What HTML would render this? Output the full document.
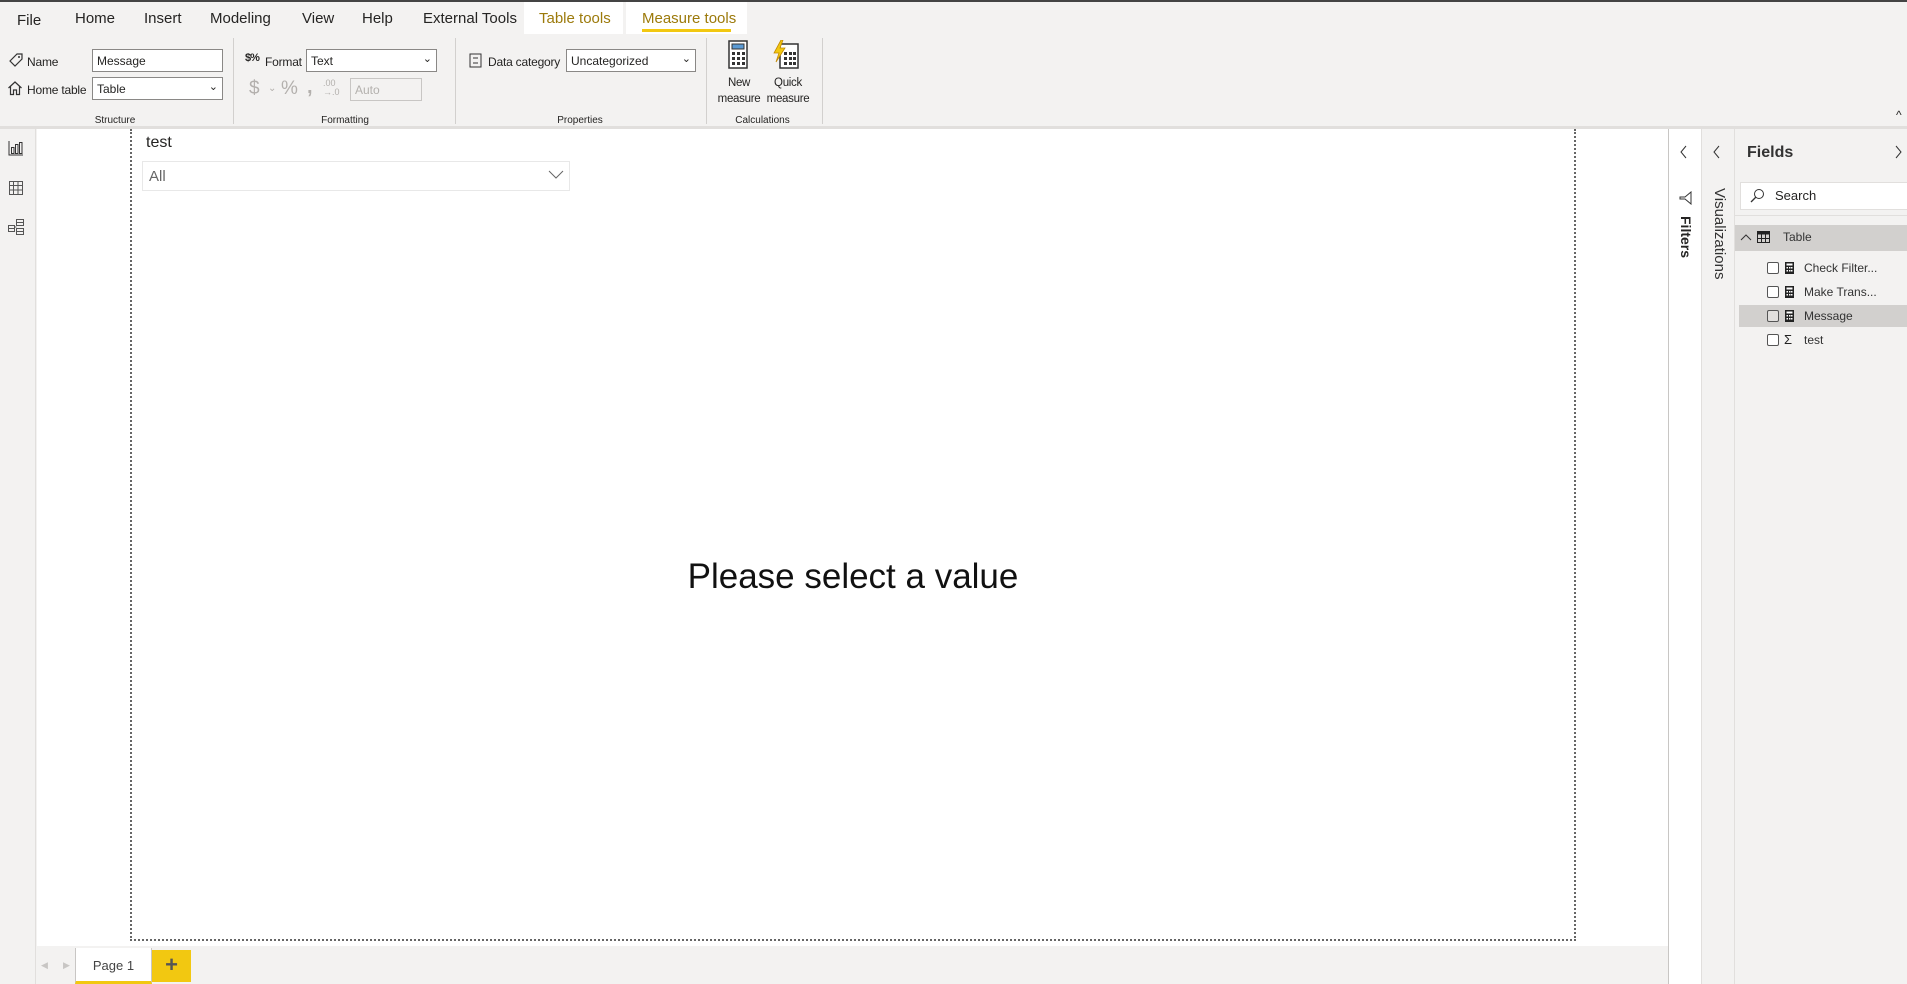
<!DOCTYPE html>
<html><head><meta charset="utf-8">
<style>
*{box-sizing:border-box;margin:0;padding:0}
body{width:1907px;height:984px;overflow:hidden;background:#f3f2f1;font-family:"Liberation Sans",sans-serif;color:#252423;position:relative}
.a{position:absolute}
.t{font-size:15px;top:10px;color:#252423}
.r{font-size:12px;letter-spacing:-0.2px}
.box{background:#fff;border:1px solid #8a8886;height:23px;font-size:12px;padding:4px 4px}
.gl{font-size:10px;top:115px;color:#252423;text-align:center}
.sep{width:1px;background:#d2d0ce;top:38px;height:86px}
.caret{position:absolute;right:4px;top:2px;font-size:11px}
</style></head><body>
<div class="a" style="left:0;top:0;width:1907px;height:2px;background:#444"></div>
<!-- tabs -->
<div class="a t" style="left:17px;top:12px">File</div>
<div class="a t" style="left:75px">Home</div>
<div class="a t" style="left:144px">Insert</div>
<div class="a t" style="left:210px">Modeling</div>
<div class="a t" style="left:302px">View</div>
<div class="a t" style="left:362px">Help</div>
<div class="a t" style="left:423px">External Tools</div>
<div class="a" style="left:524px;top:2px;width:99px;height:32px;background:#fff"></div>
<div class="a t" style="left:539px;color:#9c7a0b">Table tools</div>
<div class="a" style="left:626px;top:2px;width:121px;height:32px;background:#fff"></div>
<div class="a t" style="left:642px;color:#9c7a0b">Measure tools</div>
<div class="a" style="left:642px;top:29px;width:89px;height:3px;background:#f2c811"></div>
<!-- structure -->
<svg class="a" style="left:8px;top:52px" width="16" height="16" viewBox="0 0 16 16"><path d="M2 9 L9 2 H14 V7 L7 14 Z" fill="none" stroke="#333" stroke-width="1.2"/><circle cx="11" cy="5" r="1" fill="#333"/></svg>
<div class="a r" style="left:27px;top:55px">Name</div>
<div class="a box" style="left:92px;top:49px;width:131px">Message</div>
<svg class="a" style="left:7px;top:80px" width="16" height="16" viewBox="0 0 16 16"><path d="M1.5 8 L8 2 L14.5 8 M3.5 6.5 V14.5 H6.5 V10 H9.5 V14.5 H12.5 V6.5" fill="none" stroke="#333" stroke-width="1.2"/></svg>
<div class="a r" style="left:27px;top:83px">Home table</div>
<div class="a box" style="left:92px;top:77px;width:131px">Table<span class="caret">⌄</span></div>
<div class="a gl" style="left:60px;width:110px">Structure</div>
<div class="a sep" style="left:233px"></div>
<!-- formatting -->
<div class="a" style="left:245px;top:52px;font-size:11px;font-weight:bold;letter-spacing:-1px">$%</div>
<div class="a r" style="left:265px;top:55px">Format</div>
<div class="a box" style="left:306px;top:49px;width:131px">Text<span class="caret">⌄</span></div>
<div class="a" style="left:249px;top:78px;font-size:19px;color:#b3b0ad">$</div>
<div class="a" style="left:268px;top:83px;font-size:10px;color:#b3b0ad">⌄</div>
<div class="a" style="left:281px;top:78px;font-size:19px;color:#b3b0ad">%</div>
<div class="a" style="left:307px;top:76px;font-size:20px;color:#b3b0ad;font-weight:bold">,</div>
<div class="a" style="left:323px;top:79px;font-size:9px;color:#b3b0ad;line-height:9px">.00<br>→.0</div>
<div class="a" style="left:350px;top:78px;width:72px;height:23px;border:1px solid #c8c6c4;font-size:12px;color:#b3b0ad;padding:4px 4px">Auto</div>
<div class="a gl" style="left:290px;width:110px">Formatting</div>
<div class="a sep" style="left:455px"></div>
<!-- properties -->
<svg class="a" style="left:469px;top:53px" width="13" height="15" viewBox="0 0 13 15"><rect x="1" y="1" width="11" height="13" fill="none" stroke="#333"/><path d="M4 5h5M4 10h5" stroke="#333"/></svg>
<div class="a r" style="left:488px;top:55px">Data category</div>
<div class="a box" style="left:566px;top:49px;width:130px">Uncategorized<span class="caret">⌄</span></div>
<div class="a gl" style="left:525px;width:110px">Properties</div>
<div class="a sep" style="left:706px"></div>
<!-- calculations -->
<svg class="a" style="left:728px;top:40px" width="20" height="29" viewBox="0 0 20 29"><rect x="1" y="1" width="18" height="27" fill="#fff" stroke="#333" stroke-width="1.5"/><rect x="4" y="4" width="12" height="5" fill="#5b9bd5" stroke="#333"/><g fill="#333"><rect x="4" y="12" width="3" height="3"/><rect x="9" y="12" width="3" height="3"/><rect x="14" y="12" width="3" height="3"/><rect x="4" y="17" width="3" height="3"/><rect x="9" y="17" width="3" height="3"/><rect x="14" y="17" width="3" height="3"/><rect x="4" y="22" width="3" height="3"/><rect x="9" y="22" width="3" height="3"/><rect x="14" y="22" width="3" height="3"/></g></svg>
<svg class="a" style="left:772px;top:40px" width="28" height="29" viewBox="0 0 28 29"><rect x="8" y="4" width="18" height="24" fill="#fff" stroke="#333" stroke-width="1.5"/><g fill="#333"><rect x="12" y="12" width="3" height="3"/><rect x="17" y="12" width="3" height="3"/><rect x="21" y="12" width="3" height="3"/><rect x="12" y="17" width="3" height="3"/><rect x="17" y="17" width="3" height="3"/><rect x="21" y="17" width="3" height="3"/><rect x="12" y="22" width="3" height="3"/><rect x="17" y="22" width="3" height="3"/><rect x="21" y="22" width="3" height="3"/></g><path d="M9 0 L2 13 H7 L4 22 L13 8 H8 L11 0Z" fill="#f2c811" stroke="#c48a00" stroke-width="0.8"/></svg>
<div class="a" style="left:714px;top:75px;width:50px;text-align:center;line-height:16px;font-size:11.5px;letter-spacing:-0.3px">New<br>measure</div>
<div class="a" style="left:763px;top:75px;width:50px;text-align:center;line-height:16px;font-size:11.5px;letter-spacing:-0.3px">Quick<br>measure</div>
<div class="a gl" style="left:710px;width:105px">Calculations</div>
<div class="a sep" style="left:822px"></div>
<div class="a" style="left:1896px;top:108px;font-size:12px">^</div>
<div class="a" style="left:0;top:126px;width:1907px;height:3px;background:#e1dfdd"></div>
<!-- left nav -->
<div class="a" style="left:0;top:129px;width:36px;height:855px;background:#f3f2f1;border-right:1px solid #e1dfdd"></div>
<svg class="a" style="left:8px;top:140px" width="16" height="16" viewBox="0 0 16 16"><path d="M1 1V15H15" fill="none" stroke="#333"/><rect x="3.5" y="7.5" width="2.5" height="6" fill="none" stroke="#333"/><rect x="7.5" y="4.5" width="2.5" height="9" fill="none" stroke="#333"/><rect x="11.5" y="2.5" width="2.5" height="11" fill="none" stroke="#333"/></svg>
<svg class="a" style="left:8px;top:180px" width="16" height="16" viewBox="0 0 16 16"><path d="M1.5 1.5H14.5V14.5H1.5ZM1.5 5.5H14.5M1.5 10H14.5M5.5 1.5V14.5M10 1.5V14.5" fill="none" stroke="#555"/></svg>
<svg class="a" style="left:7px;top:218px" width="18" height="18" viewBox="0 0 18 18"><path d="M1.5 7.5H7.5V13.5H1.5ZM1.5 10.5H7.5M9.5 1.5H16.5V7.5H9.5ZM9.5 4.5H16.5M9.5 10.5H16.5V16.5H9.5ZM9.5 13.5H16.5M7.5 9H9.5" fill="none" stroke="#555"/></svg>
<!-- canvas -->
<div class="a" style="left:37px;top:129px;width:1631px;height:817px;background:#fff"></div>
<div class="a" style="left:130px;top:129px;width:1446px;height:812px;border:2px dotted #666;border-top:none"></div>
<div class="a" style="left:146px;top:134px;font-size:16px;color:#252423">test</div>
<div class="a" style="left:142px;top:161px;width:428px;height:30px;border:1px solid #e8e8e8;background:#fff"></div>
<div class="a" style="left:149px;top:168px;font-size:15px;color:#666">All</div>
<svg class="a" style="left:548px;top:170px" width="16" height="10" viewBox="0 0 16 10"><path d="M1 1L8 8L15 1" fill="none" stroke="#666"/></svg>
<div class="a" style="left:130px;top:557px;width:1446px;text-align:center;font-size:35px;color:#111">Please select a value</div>
<!-- bottom -->
<div class="a" style="left:37px;top:946px;width:1631px;height:38px;background:#f3f2f1"></div>
<div class="a" style="left:41px;top:960px;font-size:9px;color:#c8c6c4">◀</div>
<div class="a" style="left:63px;top:960px;font-size:9px;color:#c8c6c4">▶</div>
<div class="a" style="left:75px;top:948px;width:77px;height:36px;background:#fff;border-left:1px solid #c8c6c4;border-right:1px solid #c8c6c4;border-bottom:3px solid #f2c811"></div>
<div class="a" style="left:75px;top:958px;width:77px;text-align:center;font-size:13px;color:#444">Page 1</div>
<div class="a" style="left:152px;top:950px;width:39px;height:32px;background:#f2c811;text-align:center;font-size:22px;font-weight:bold;color:#555;line-height:30px">+</div>
<!-- filters pane -->
<div class="a" style="left:1668px;top:129px;width:34px;height:855px;background:#fff;border-left:1px solid #c8c6c4;border-right:1px solid #e1dfdd"></div>
<svg class="a" style="left:1679px;top:145px" width="10" height="14" viewBox="0 0 10 14"><path d="M7 1L2 7L7 13" fill="none" stroke="#333"/></svg>
<svg class="a" style="left:1678px;top:191px" width="14" height="14" viewBox="0 0 14 14"><path d="M13 1V13L7 8H2V6H7Z" fill="none" stroke="#333"/></svg>
<div class="a" style="left:1676px;top:216px;transform-origin:0 0;transform:translate(18px,0) rotate(90deg);font-size:14px;font-weight:bold;white-space:nowrap">Filters</div>
<!-- visualizations -->
<div class="a" style="left:1702px;top:129px;width:33px;height:855px;background:#f3f2f1;border-right:1px solid #e1dfdd"></div>
<svg class="a" style="left:1712px;top:145px" width="10" height="14" viewBox="0 0 10 14"><path d="M7 1L2 7L7 13" fill="none" stroke="#333"/></svg>
<div class="a" style="left:1710px;top:188px;transform-origin:0 0;transform:translate(18px,0) rotate(90deg);font-size:15px;white-space:nowrap;color:#333">Visualizations</div>
<!-- fields -->
<div class="a" style="left:1747px;top:144px;font-size:16px;font-weight:bold;color:#333">Fields</div>
<svg class="a" style="left:1893px;top:145px" width="10" height="14" viewBox="0 0 10 14"><path d="M3 1L8 7L3 13" fill="none" stroke="#333"/></svg>
<div class="a" style="left:1740px;top:182px;width:170px;height:28px;background:#fff;border:1px solid #e1dfdd"></div>
<svg class="a" style="left:1750px;top:188px" width="15" height="15" viewBox="0 0 15 15"><circle cx="9" cy="6" r="4.5" fill="none" stroke="#333"/><path d="M6 9L1 14" stroke="#333" stroke-width="1.3"/></svg>
<div class="a" style="left:1775px;top:188px;font-size:13px">Search</div>
<div class="a" style="left:1735px;top:215px;width:172px;height:1px;background:#e1dfdd"></div>
<div class="a" style="left:1735px;top:225px;width:172px;height:26px;background:#d2d0ce"></div>
<svg class="a" style="left:1740px;top:233px" width="12" height="8" viewBox="0 0 12 8"><path d="M1 7L6 2L11 7" fill="none" stroke="#333"/></svg>
<svg class="a" style="left:1757px;top:231px" width="13" height="12" viewBox="0 0 13 12"><rect x="0.5" y="0.5" width="12" height="11" fill="none" stroke="#222"/><rect x="0.5" y="0.5" width="12" height="3" fill="#222"/><path d="M4.5 0V12M8.5 0V12M0 7.5H13" stroke="#222"/></svg>
<div class="a" style="left:1783px;top:230px;font-size:12px;color:#333">Table</div>
<div class="a" style="left:1739px;top:305px;width:168px;height:22px;background:#d2d0ce"></div>
<div class="a" style="left:1767px;top:262px;width:12px;height:12px;border:1px solid #555;border-radius:2px;background:#fff"></div>
<div class="a" style="left:1767px;top:286px;width:12px;height:12px;border:1px solid #555;border-radius:2px;background:#fff"></div>
<div class="a" style="left:1767px;top:310px;width:12px;height:12px;border:1px solid #555;border-radius:2px;background:#e1dfdd"></div>
<div class="a" style="left:1767px;top:334px;width:12px;height:12px;border:1px solid #555;border-radius:2px;background:#fff"></div>
<svg class="a" style="left:1785px;top:262px" width="9" height="12" viewBox="0 0 9 12"><rect width="9" height="12" fill="#222"/><rect x="1.5" y="1.5" width="6" height="2" fill="#fff"/><g fill="#fff"><rect x="1.5" y="5" width="1.5" height="1.5"/><rect x="4" y="5" width="1.5" height="1.5"/><rect x="6" y="5" width="1.5" height="1.5"/><rect x="1.5" y="8" width="1.5" height="1.5"/><rect x="4" y="8" width="1.5" height="1.5"/><rect x="6" y="8" width="1.5" height="1.5"/></g></svg>
<svg class="a" style="left:1785px;top:286px" width="9" height="12" viewBox="0 0 9 12"><rect width="9" height="12" fill="#222"/><rect x="1.5" y="1.5" width="6" height="2" fill="#fff"/><g fill="#fff"><rect x="1.5" y="5" width="1.5" height="1.5"/><rect x="4" y="5" width="1.5" height="1.5"/><rect x="6" y="5" width="1.5" height="1.5"/><rect x="1.5" y="8" width="1.5" height="1.5"/><rect x="4" y="8" width="1.5" height="1.5"/><rect x="6" y="8" width="1.5" height="1.5"/></g></svg>
<svg class="a" style="left:1785px;top:310px" width="9" height="12" viewBox="0 0 9 12"><rect width="9" height="12" fill="#222"/><rect x="1.5" y="1.5" width="6" height="2" fill="#fff"/><g fill="#fff"><rect x="1.5" y="5" width="1.5" height="1.5"/><rect x="4" y="5" width="1.5" height="1.5"/><rect x="6" y="5" width="1.5" height="1.5"/><rect x="1.5" y="8" width="1.5" height="1.5"/><rect x="4" y="8" width="1.5" height="1.5"/><rect x="6" y="8" width="1.5" height="1.5"/></g></svg>
<div class="a" style="left:1784px;top:332px;font-size:13px;color:#222">Σ</div>
<div class="a" style="left:1804px;top:261px;font-size:12px;color:#333">Check Filter...</div>
<div class="a" style="left:1804px;top:285px;font-size:12px;color:#333">Make Trans...</div>
<div class="a" style="left:1804px;top:309px;font-size:12px;color:#333">Message</div>
<div class="a" style="left:1804px;top:333px;font-size:12px;color:#333">test</div>
</body></html>
